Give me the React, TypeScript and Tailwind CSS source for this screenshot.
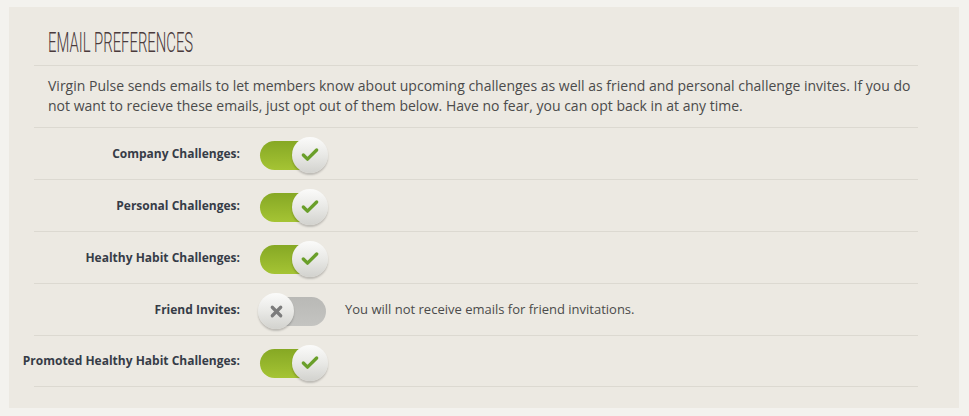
import { Check, X } from "lucide-react";

const rows: { label: string; on: boolean; note?: string }[] = [
  { label: "Company Challenges:", on: true },
  { label: "Personal Challenges:", on: true },
  { label: "Healthy Habit Challenges:", on: true },
  { label: "Friend Invites:", on: false, note: "You will not receive emails for friend invitations." },
  { label: "Promoted Healthy Habit Challenges:", on: true },
];

function Toggle({ on }: { on: boolean }) {
  return (
    <div className="relative h-[36px] w-[70px]">
      <div
        className={
          on
            ? "absolute left-[2px] top-[4px] h-[29px] w-[66px] rounded-full bg-gradient-to-b from-[#86a824] to-[#a5c434]"
            : "absolute left-[2px] top-[4px] h-[29px] w-[66px] rounded-full bg-gradient-to-b from-[#b9b9b6] to-[#c4c4c1]"
        }
      />
      <div
        className={
          (on ? "left-[34px]" : "left-0") +
          " absolute top-0 flex h-[36px] w-[36px] items-center justify-center rounded-full bg-gradient-to-b from-[#fbfbfa] via-[#e9e9e6] to-[#d2d2ce] shadow-[0_2px_2px_rgba(0,0,0,0.2)]"
        }
      >
        {on ? (
          <Check className="h-[20px] w-[20px] text-[#6a9f2a]" strokeWidth={4} />
        ) : (
          <X className="h-[17px] w-[17px] text-[#7c7c7c]" strokeWidth={4.5} />
        )}
      </div>
    </div>
  );
}

export default function App() {
  return (
    <div className="h-[416px] w-[969px] bg-[#f3f2ee] pl-[9px] pt-[7px]">
      <div className="h-[401px] w-[950px] bg-[#ece9e2] pl-[25px] pr-[41px] font-['Open_Sans',sans-serif]">
        <div className="h-[58px] pl-[14px] pt-[22px]">
          <h2 className="origin-left scale-x-[0.53] whitespace-nowrap font-['Roboto',sans-serif] text-[28px] font-light leading-[28px] text-[#4a3a3c]">
            EMAIL PREFERENCES
          </h2>
        </div>
        <div className="border-t border-[#dcd9d1]">
          <p className="pb-[11px] pl-[14px] pr-0 pt-[10px] text-[14px] leading-[20px] text-[#4b4b4b]">
            Virgin Pulse sends emails to let members know about upcoming challenges as well as friend and personal
            challenge invites. If you do not want to recieve these emails, just opt out of them below. Have no fear, you
            can opt back in at any time.
          </p>
        </div>
        {rows.map((row) => (
          <div
            key={row.label}
            className="flex h-[52px] items-center border-t border-[#dcd9d1] last:border-b"
          >
            <div className="-ml-[25px] w-[240px] pr-[9px] text-right text-[12px] font-bold text-[#363c47]">
              {row.label}
            </div>
            <div className="ml-[9px] mt-[3px]">
              <Toggle on={row.on} />
            </div>
            {row.note ? (
              <span className="ml-[17px] text-[13px] text-[#4b4b4b]">{row.note}</span>
            ) : null}
          </div>
        ))}
      </div>
    </div>
  );
}
